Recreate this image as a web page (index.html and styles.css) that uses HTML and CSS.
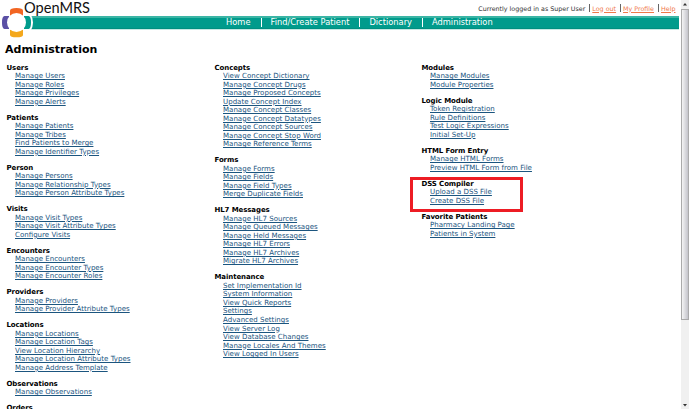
FILE: index.html
```html
<!DOCTYPE html>
<html lang="en">
<head>
<meta charset="utf-8">
<title>OpenMRS - Administration</title>
<link rel="stylesheet" href="styles.css">
</head>
<body>
<div class="page">
  <header class="header">
    <div class="userbar">
      <span class="who">Currently logged in as Super User</span>
      <a class="out" href="#">Log out</a>
      <a class="profile" href="#">My Profile</a>
      <a class="help" href="#">Help</a>
    </div>
    <nav class="nav">
      <a class="home" href="#">Home</a>
      <a class="find" href="#">Find/Create Patient</a>
      <a class="dict" href="#">Dictionary</a>
      <a class="admin" href="#">Administration</a>
    </nav>
    <svg class="logo" width="36" height="40" viewBox="0 0 36 40">
      <path d="M0 6H24Q33 14 33 22.500Q33 31 24 38H0Z" fill="#fff"/>
      <path d="M10 10.500Q10 8 16.500 8Q23 8 23 10.500V16H10Z" fill="#f26522"/>
      <path d="M10 29H23V35Q23 37.300 16.500 37.300Q10 37.300 10 35Z" fill="#f4a81c"/>
      <path d="M9 16H4.500Q2 16 2 22.500Q2 29 4.500 29H9Z" fill="#5b50a5"/>
      <path d="M24 16H28.500Q31 16 31 22.500Q31 29 28.500 29H24Z" fill="#009b8c"/>
      <circle cx="16.500" cy="22.500" r="9.500" fill="#fff"/>
    </svg>
    <span class="brand">OpenMRS</span>
  </header>
  <h1>Administration</h1>
  <main class="columns">
    <div class="column">
      <section><h2>Users</h2><a href="#">Manage Users</a><a href="#">Manage Roles</a><a href="#">Manage Privileges</a><a href="#">Manage Alerts</a></section>
      <section><h2>Patients</h2><a href="#">Manage Patients</a><a href="#">Manage Tribes</a><a href="#">Find Patients to Merge</a><a href="#">Manage Identifier Types</a></section>
      <section><h2>Person</h2><a href="#">Manage Persons</a><a href="#">Manage Relationship Types</a><a href="#">Manage Person Attribute Types</a></section>
      <section><h2>Visits</h2><a href="#">Manage Visit Types</a><a href="#">Manage Visit Attribute Types</a><a href="#">Configure Visits</a></section>
      <section><h2>Encounters</h2><a href="#">Manage Encounters</a><a href="#">Manage Encounter Types</a><a href="#">Manage Encounter Roles</a></section>
      <section><h2>Providers</h2><a href="#">Manage Providers</a><a href="#">Manage Provider Attribute Types</a></section>
      <section><h2>Locations</h2><a href="#">Manage Locations</a><a href="#">Manage Location Tags</a><a href="#">View Location Hierarchy</a><a href="#">Manage Location Attribute Types</a><a href="#">Manage Address Template</a></section>
      <section><h2>Observations</h2><a href="#">Manage Observations</a></section>
      <section><h2>Orders</h2></section>
    </div>
    <div class="column">
      <section><h2>Concepts</h2><a href="#">View Concept Dictionary</a><a href="#">Manage Concept Drugs</a><a href="#">Manage Proposed Concepts</a><a href="#">Update Concept Index</a><a href="#">Manage Concept Classes</a><a href="#">Manage Concept Datatypes</a><a href="#">Manage Concept Sources</a><a href="#">Manage Concept Stop Word</a><a href="#">Manage Reference Terms</a></section>
      <section><h2>Forms</h2><a href="#">Manage Forms</a><a href="#">Manage Fields</a><a href="#">Manage Field Types</a><a href="#">Merge Duplicate Fields</a></section>
      <section><h2>HL7 Messages</h2><a href="#">Manage HL7 Sources</a><a href="#">Manage Queued Messages</a><a href="#">Manage Held Messages</a><a href="#">Manage HL7 Errors</a><a href="#">Manage HL7 Archives</a><a href="#">Migrate HL7 Archives</a></section>
      <section><h2>Maintenance</h2><a href="#">Set Implementation Id</a><a href="#">System Information</a><a href="#">View Quick Reports</a><a href="#">Settings</a><a href="#">Advanced Settings</a><a href="#">View Server Log</a><a href="#">View Database Changes</a><a href="#">Manage Locales And Themes</a><a href="#">View Logged In Users</a></section>
    </div>
    <div class="column">
      <section><h2>Modules</h2><a href="#">Manage Modules</a><a href="#">Module Properties</a></section>
      <section><h2>Logic Module</h2><a href="#">Token Registration</a><a href="#">Rule Definitions</a><a href="#">Test Logic Expressions</a><a href="#">Initial Set-Up</a></section>
      <section><h2>HTML Form Entry</h2><a href="#">Manage HTML Forms</a><a href="#">Preview HTML Form from File</a></section>
      <section class="marked"><h2>DSS Compiler</h2><a href="#">Upload a DSS File</a><a href="#">Create DSS File</a></section>
      <section><h2>Favorite Patients</h2><a href="#">Pharmacy Landing Page</a><a href="#">Patients in System</a></section>
    </div>
  </main>
</div>
<aside class="scrollbar">
  <svg class="arrow" width="8" height="9" viewBox="0 0 8 9"><path d="M2 5.500L4 3L6 5.500Z" fill="#333"/></svg>
  <div class="thumb"></div>
  <svg class="arrow" width="8" height="9" viewBox="0 0 8 9"><path d="M2 4L4 6.500L6 4Z" fill="#333"/></svg>
</aside>
</body>
</html>
```
FILE: styles.css
```css
*, *::before, *::after { box-sizing: border-box; }
body {
  margin: 0;
  width: 690px;
  height: 409px;
  overflow: hidden;
  display: flex;
  background: #fff;
  font-family: "DejaVu Sans", sans-serif;
  font-size: 7.1px;
  color: #000;
}
.page { width: 681px; height: 409px; overflow: hidden; }
.header { position: relative; height: 42px; }
.userbar {
  height: 16px;
  display: flex;
  justify-content: flex-end;
  align-items: center;
  padding-right: 5.500px;
  line-height: 17px;
  font-size: 6.35px;
  color: #333;
  white-space: nowrap;
}
.userbar a { color: #f0784a; margin-left: 4px; padding-left: 3px; position: relative; text-underline-offset: 1px; }
.userbar a::before {
  content: "";
  position: absolute;
  left: 0;
  top: 4px;
  width: 1px;
  height: 8px;
  background: #666;
}
.nav {
  width: 679px;
  height: 14px;
  padding: 0 0 2px 226px;
  display: flex;
  align-items: center;
  background: linear-gradient(#3bb5a5 0 2px, #009b8c 2px 12px, #008f80 12px 13px, #c4e9e4 13px);
  font-size: 8.3px;
  line-height: 12px;
}
.nav a { color: #fff; text-decoration: none; white-space: nowrap; }
.nav a + a { margin-left: 10px; padding-left: 9px; border-left: 1px solid #fff; line-height: 9px; }
.logo { position: absolute; left: 0; top: 0; }
.brand {
  position: absolute;
  left: 24px;
  top: 0;
  font: 14.6px/15px Lato, sans-serif;
  color: #111;
}
h1 { margin: 0 0 0 5px; font-size: 11px; line-height: 16px; }
.columns { display: grid; grid-template-columns: 208px 207px 1fr; padding: 5.600px 0 0 6.500px; }
section { display: flex; flex-direction: column; align-items: flex-start; margin-bottom: 7.400px; position: relative; }
h2 { margin: 0; font-size: 7px; line-height: 8.600px; letter-spacing: -.1px; white-space: nowrap; }
.columns a { margin-left: 8.500px; line-height: 8.520px; font-size: 7.06px; color: #1b557f; white-space: nowrap; text-underline-offset: 1px; text-decoration-thickness: 1px; }
.marked::after {
  content: "";
  position: absolute;
  left: -11.500px;
  top: -3px;
  width: 113px;
  height: 35px;
  border: 3px solid #ed1c24;
}
.scrollbar { width: 8px; height: 409px; display: flex; flex-direction: column; background: #f0f0f0; }
.arrow { display: block; flex: none; }
.thumb { height: 311px; border: 1px solid #aaa; background: linear-gradient(90deg, #f4f4f4, #c4c4cb); }
.scrollbar .arrow:last-child { margin-top: auto; }
```
